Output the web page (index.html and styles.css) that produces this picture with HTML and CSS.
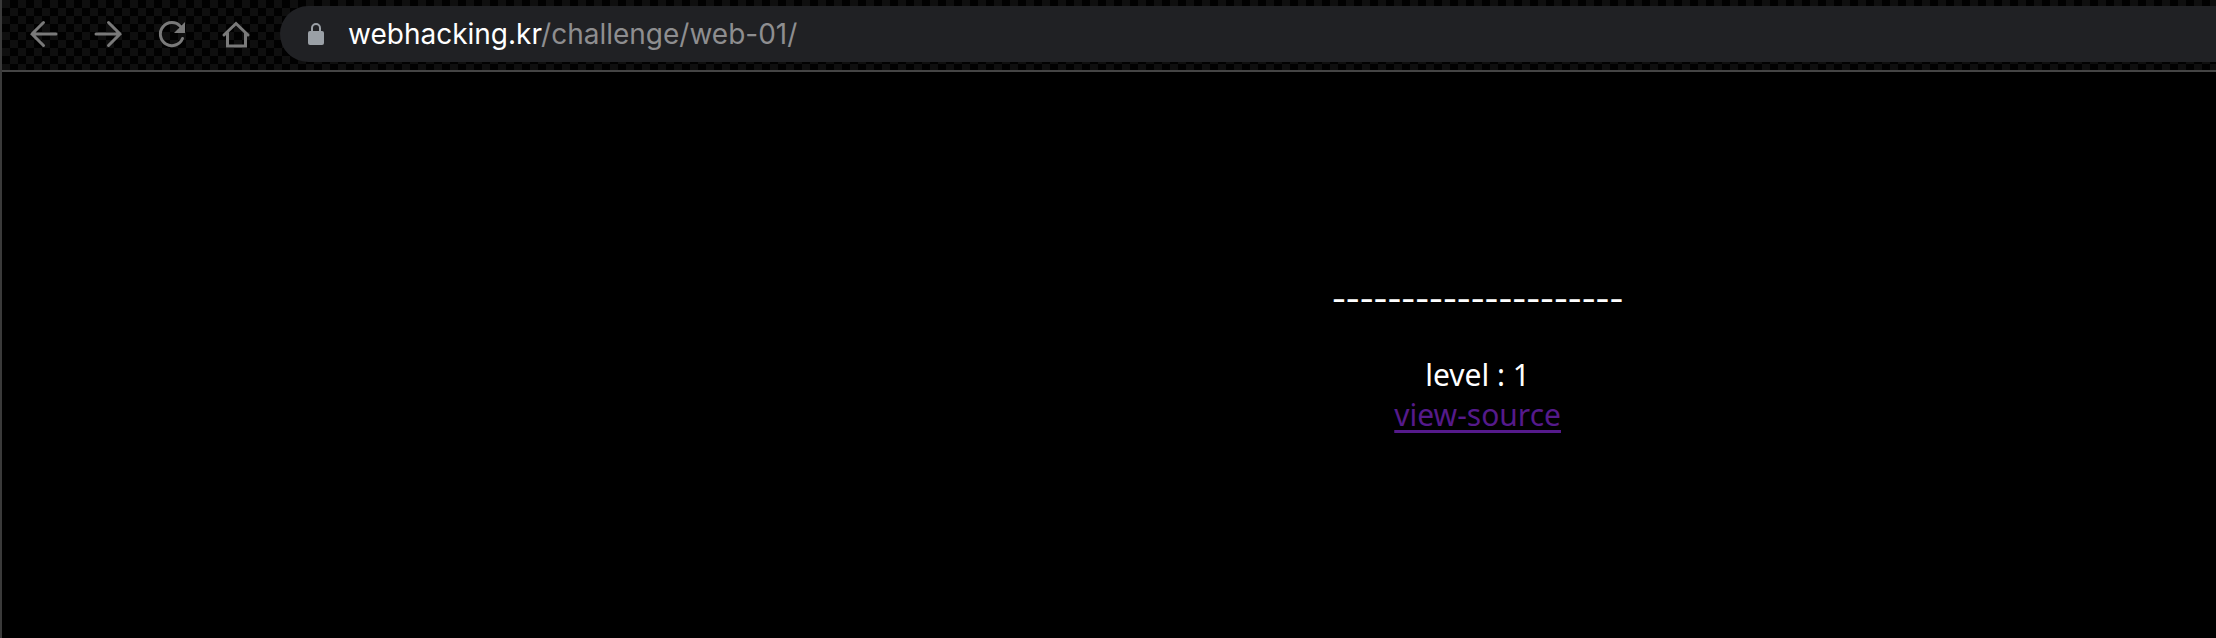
FILE: index.html
```
<!DOCTYPE html>
<html lang="en">
<head>
    <meta charset="utf-8">
    <title>Challenge 1</title>
    <link rel="stylesheet" href="styles.css">
</head>
<body>
    <header class="toolbar">
        <nav class="nav-buttons">
            <button type="button" aria-label="Back">
                <svg viewBox="0 0 32 32"><path d="M28 16H4M15.500 4.500L4 16l11.500 11.500"/></svg>
            </button>
            <button type="button" aria-label="Forward">
                <svg viewBox="0 0 32 32"><path d="M4 16h24M16.500 4.500L28 16 16.500 27.500"/></svg>
            </button>
            <button type="button" aria-label="Reload">
                <svg viewBox="0 0 32 32"><path d="M26.500 20.500A11.500 11.500 0 1 1 24.500 8.500"/><path class="solid" d="M29 4v11H18z"/></svg>
            </button>
            <button type="button" aria-label="Home">
                <svg viewBox="0 0 32 32"><path d="M4 17L16 5.500 28 17M7.500 15v13h18V15"/></svg>
            </button>
        </nav>
        <div class="address-bar">
            <svg class="lock" viewBox="0 0 16 22"><rect y="8" width="16" height="14" rx="2"/><path d="M4 9V5a4 4 0 0 1 8 0v4"/></svg>
            <span class="url"><span class="host">webhacking.kr</span>/challenge/web-01/</span>
        </div>
    </header>
    <main class="challenge">
        <div class="rule">---------------------</div>
        <div>level : 1</div>
        <a href="?view_source=1">view-source</a>
    </main>
</body>
</html>
```
FILE: styles.css
```
* { box-sizing: border-box; }
body {
    margin: 0;
    min-height: 100vh;
    background: #000;
    color: #fff;
    border-left: 2px solid #3a3a3a;
    font-family: "Noto Sans", sans-serif;
}
.toolbar {
    display: flex;
    height: 72px;
    padding: 6px 0 8px 26px;
    border-bottom: 2px solid #444;
    background: repeating-conic-gradient(#010101 0 25%, #0f0f0f 0 50%) 0 0 / 16px 16px;
}
.nav-buttons {
    display: flex;
    align-items: center;
    gap: 32px;
    margin-right: 28px;
}
.nav-buttons button {
    width: 32px;
    height: 32px;
    padding: 0;
    border: 0;
    background: none;
}
.nav-buttons svg {
    display: block;
    fill: none;
    stroke: #7a7a7a;
    stroke-width: 3;
    stroke-linecap: round;
}
.nav-buttons .solid { fill: #7a7a7a; stroke: none; }
.address-bar {
    flex: 1;
    display: flex;
    align-items: center;
    gap: 24px;
    padding-left: 28px;
    border-radius: 28px 0 0 28px;
    background: #202124;
}
.lock { width: 16px; height: 22px; fill: #9aa0a6; }
.lock path { fill: none; stroke: #9aa0a6; stroke-width: 2; }
.url {
    color: #8e8e90;
    font-family: Inter, sans-serif;
    font-size: 28px;
    line-height: 32px;
}
.host { color: #fff; }
.challenge {
    margin-left: 33.3%;
    padding-top: 203px;
    text-align: center;
    font-size: 30px;
    line-height: 40px;
}
.rule {
    margin-bottom: 40px;
    font-family: "Noto Sans CJK KR", sans-serif;
    font-size: 40px;
}
a {
    color: #551a8b;
    text-decoration-thickness: 3px;
    text-underline-offset: 4px;
}
```
